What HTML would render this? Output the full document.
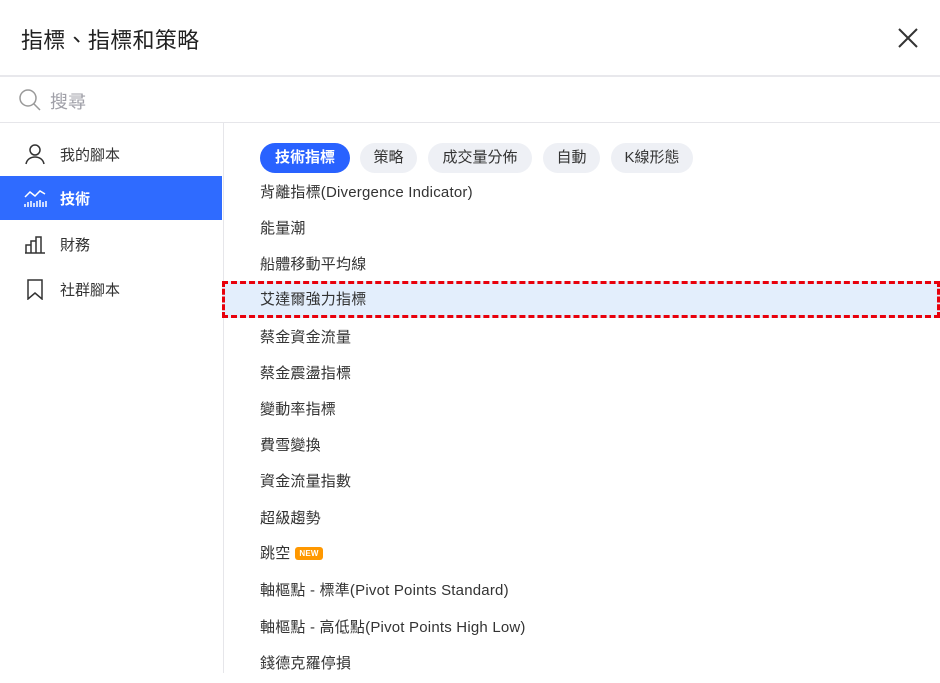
<!DOCTYPE html>
<html><head><meta charset="utf-8"><style>
*{margin:0;padding:0;box-sizing:border-box}
body{width:940px;height:673px;overflow:hidden;background:#fff;font-family:"Liberation Sans","Noto Sans CJK TC",sans-serif;color:#333;position:relative}
.title{position:absolute;left:21px;top:23px;font-size:22px;color:#222;letter-spacing:0.3px}
.close{position:absolute;left:897px;top:27px}
.hr1{position:absolute;left:0;top:75px;width:940px;height:2px;background:#e8e8ec}
.search{position:absolute;left:18px;top:88px}
.sph{position:absolute;left:50px;top:88px;font-size:18px;color:#a0a0a8}
.hr2{position:absolute;left:0;top:122px;width:940px;height:1px;background:#e6e6ea}
.side{position:absolute;left:223px;top:123px;width:1px;height:550px;background:#e6e6ea}
.nav{position:absolute;left:0;width:222px;height:44px;font-size:15px;color:#333}
.nav span{position:absolute;left:60px;top:12px}
.nav svg{position:absolute;left:24px;top:11px}
.nav.act{background:#2f6bff;color:#fff;font-weight:bold}
.chip{position:absolute;top:143px;height:30px;border-radius:15px;background:#eef0f5;font-size:15px;line-height:30px;text-align:center;color:#333}
.chip.on{background:#2962ff;color:#fff;font-weight:bold}
.row{position:absolute;left:224px;width:716px;height:36px;font-size:15px;line-height:38px;padding-left:36px;color:#333;letter-spacing:0.2px}
.hl{background:#e3eefc;border:3px dashed #e8000b;left:222px;width:718px;padding-left:35px;line-height:32px}
.new{display:inline-block;background:#ff9800;color:#fff;font-size:8px;font-weight:bold;border-radius:3px;padding:0 4px;line-height:13px;vertical-align:2px;margin-left:5px}
</style></head><body>
<div class="title">指標、指標和策略</div>
<svg class="close" width="22" height="22" viewBox="0 0 22 22"><path d="M2 2L20 20M20 2L2 20" stroke="#333" stroke-width="2"/></svg>
<div class="hr1"></div>
<svg class="search" width="24" height="24" viewBox="0 0 24 24"><circle cx="10" cy="10" r="8" fill="none" stroke="#999" stroke-width="1.5"/><path d="M16 16L22 22" stroke="#999" stroke-width="1.5"/></svg>
<div class="sph">搜尋</div>
<div class="hr2"></div>
<div class="side"></div>
<div class="nav" style="top:132px"><svg width="22" height="22" viewBox="0 0 22 22"><circle cx="11" cy="7" r="5" fill="none" stroke="#333" stroke-width="1.5"/><path d="M2 21c1-5 5-7 9-7s8 2 9 7" fill="none" stroke="#333" stroke-width="1.5"/></svg><span>我的腳本</span></div>
<div class="nav act" style="top:176px"><svg width="24" height="22" viewBox="0 0 24 22"><path d="M1 10l5-5 5 4 5-5 5 3" fill="none" stroke="#fff" stroke-width="1.5"/><path d="M1 20v-3M4 20v-5M7 20v-6M10 20v-4M13 20v-6M16 20v-7M19 20v-5M22 20v-6" stroke="#fff" stroke-width="1.5"/></svg><span>技術</span></div>
<div class="nav" style="top:222px"><svg width="22" height="22" viewBox="0 0 22 22"><path d="M1 20h20M2 20v-8h5v8M7 20v-12h5v12M12 20v-16h5v16" fill="none" stroke="#333" stroke-width="1.5"/></svg><span>財務</span></div>
<div class="nav" style="top:267px"><svg width="22" height="22" viewBox="0 0 22 22"><path d="M4 2h14v19l-7-6-7 6z" fill="none" stroke="#333" stroke-width="1.5"/></svg><span>社群腳本</span></div>
<div class="chip on" style="left:260px;width:90px">技術指標</div>
<div class="chip" style="left:360px;width:57px">策略</div>
<div class="chip" style="left:428px;width:104px">成交量分佈</div>
<div class="chip" style="left:543px;width:57px">自動</div>
<div class="chip" style="left:611px;width:82px">K線形態</div>
<div class="row" style="top:174px">背離指標(Divergence Indicator)</div>
<div class="row" style="top:210px">能量潮</div>
<div class="row" style="top:246px">船體移動平均線</div>
<div class="row hl" style="top:281px;height:37px">艾達爾強力指標</div>
<div class="row" style="top:319px">蔡金資金流量</div>
<div class="row" style="top:355px">蔡金震盪指標</div>
<div class="row" style="top:391px">變動率指標</div>
<div class="row" style="top:427px">費雪變換</div>
<div class="row" style="top:463px">資金流量指數</div>
<div class="row" style="top:500px">超級趨勢</div>
<div class="row" style="top:535px">跳空<span class="new">NEW</span></div>
<div class="row" style="top:572px">軸樞點 - 標準(Pivot Points Standard)</div>
<div class="row" style="top:609px">軸樞點 - 高低點(Pivot Points High Low)</div>
<div class="row" style="top:645px">錢德克羅停損</div>
</body></html>
